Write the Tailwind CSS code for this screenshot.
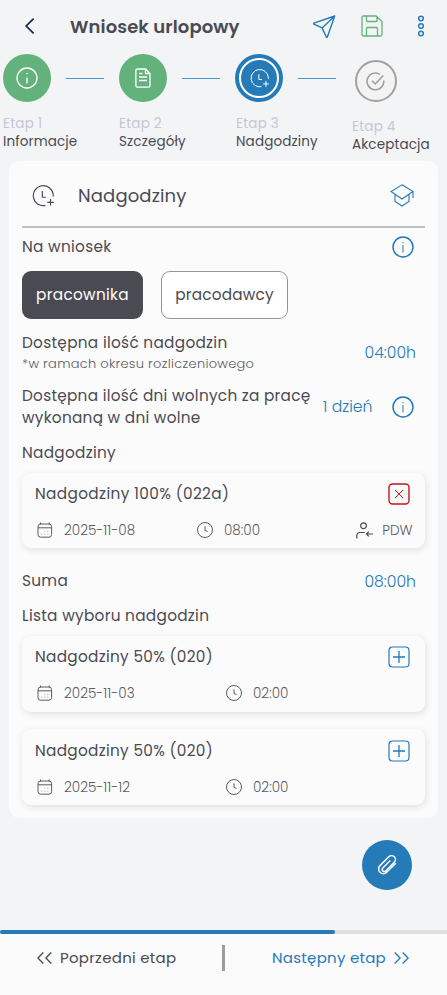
<!DOCTYPE html>
<html lang="pl">
<head>
<meta charset="utf-8">
<title>Wniosek urlopowy</title>
<script src="https://cdn.jsdelivr.net/npm/@tailwindcss/browser@4"></script>
</head>
<body class="bg-[#f2f4f6]">
<svg class="hidden">
  <symbol id="clock-plus" viewBox="0 0 22 22"><path d="M21.2 11.5V9.5A10 10 0 1 0 13.4 20.4M10.3 6v6.2h3.6M18.5 14v6.6M15.2 17.3h6.6" fill="none" stroke="currentColor" stroke-width="1.15"/></symbol>
  <symbol id="info" viewBox="0 0 22 22"><circle cx="11" cy="11" r="10" fill="none" stroke="currentColor" stroke-width="1.5"/><path d="M11 9v7.5M11 6v1.3" stroke="currentColor"/></symbol>
  <symbol id="calendar" viewBox="0 0 16 16"><rect x="1" y="2" width="13.6" height="13.2" rx="2.6" fill="none" stroke="currentColor" stroke-width=".9"/><path d="M1 5.8h13.6M3.5.5v2M12.2.5v2" stroke="currentColor" stroke-width=".9"/><path d="M7.3 9.3h1M10.3 9.3h1M4 12.2h1M7.3 12.2h1M10.3 12.2h1" stroke="currentColor" stroke-width=".8" opacity=".55"/></symbol>
  <symbol id="clock" viewBox="0 0 16 16"><circle cx="8" cy="8" r="7.5" fill="none" stroke="currentColor" stroke-width=".9"/><path d="M8 4.3v4.2l2.6.9" fill="none" stroke="currentColor" stroke-width=".9"/></symbol>
  <symbol id="plus-box" viewBox="0 0 22 22"><rect x="1" y="1" width="20" height="20" rx="3.5" fill="none" stroke="currentColor" stroke-width="1.2"/><path d="M11 5v12M5 11h12" stroke="currentColor" stroke-width="1.3"/></symbol>
</svg>
<div class="flex h-[995px] w-[447px] flex-col overflow-hidden bg-[#f2f4f6] font-['Poppins','Inter',sans-serif] text-[15.3px] font-normal tracking-[0.3px] text-[#4a4a52] whitespace-nowrap">
  <header class="flex h-[52px] shrink-0 items-center pl-[24px]">
    <svg class="h-4 w-[11px]" viewBox="0 0 11 16" fill="none" stroke="#1c2745" stroke-width="1.7"><path d="M9.6.7 2.2 8l7.4 7.3"/></svg>
    <h1 class="ml-[35px] w-[243px] text-[18px] font-semibold tracking-[0.1px]">Wniosek urlopowy</h1>
    <svg class="h-[23px] w-[23px]" viewBox="0 0 23 23" fill="none" stroke="#257ab8" stroke-width="1.4" stroke-linejoin="round"><path d="M21.7 1 .9 8.2c-.4.2-.4.8 0 1l8.2 3.7L13.3 22c.3.5.8.5 1 0ZM21.7 1 9.1 12.9"/></svg>
    <svg class="ml-[25px] h-[22px] w-[22px]" viewBox="0 0 22 22" fill="none" stroke="#63b27c" stroke-width="1.3"><path d="M2.5 1H15l6 5.5v13a1.5 1.5 0 0 1-1.5 1.5h-17A1.5 1.5 0 0 1 1 19.5V2.5A1.5 1.5 0 0 1 2.5 1ZM5.5 1v4.5a1 1 0 0 0 1 1H15a1 1 0 0 0 1-1V2M5.5 21v-7.5a1 1 0 0 1 1-1h9a1 1 0 0 1 1 1V21"/></svg>
    <svg class="ml-[34px] h-[22px] w-[8px]" viewBox="0 0 8 22" fill="none" stroke="#257ab8" stroke-width="1.5"><circle cx="4" cy="3.5" r="2.3"/><circle cx="4" cy="11" r="2.3"/><circle cx="4" cy="18.5" r="2.3"/></svg>
  </header>

  <nav class="flex h-[109px] shrink-0 pl-[3px] text-[13.5px] tracking-[0.13px]">
    <div class="w-[116px] pt-[2px]">
      <div class="flex items-center">
        <div class="flex size-12 items-center justify-center rounded-full bg-[#63b27c] text-white"><svg class="size-[22px]" viewBox="0 0 22 22" fill="none" stroke="currentColor" stroke-width="1.3"><circle cx="11" cy="11" r="10"/><path d="M11 10.5v6M11 6v1.3"/></svg></div>
        <div class="ml-[15px] h-px w-[38px] bg-[#4d93cb]"></div>
      </div>
      <div class="mt-[13px] h-[17px] leading-[18px] tracking-[0.22px] text-[#c6c6d6]">Etap 1</div>
      <div class="h-[20px] leading-[20px]">Informacje</div>
    </div>
    <div class="w-[117px] pt-[2px]">
      <div class="flex items-center">
        <div class="flex size-12 items-center justify-center rounded-full bg-[#63b27c] text-white"><svg class="h-[20px] w-[16px]" viewBox="0 0 16 20" fill="none" stroke="currentColor" stroke-width="1.3"><path d="M2.2 1h8.300L15 5.500v12.300a1.300 1.300 0 0 1-1.300 1.300H2.200A1.300 1.300 0 0 1 .9 17.800V2.300A1.300 1.300 0 0 1 2.200 1ZM10.500 1v4.500H15M4 5.500h3.500M4 9h8M4 12.500h8"/></svg></div>
        <div class="ml-[15px] h-px w-[38px] bg-[#4d93cb]"></div>
      </div>
      <div class="mt-[13px] h-[17px] leading-[18px] tracking-[0.22px] text-[#c6c6d6]">Etap 2</div>
      <div class="h-[20px] leading-[20px]">Szczegóły</div>
    </div>
    <div class="w-[116px] pt-[2px]">
      <div class="flex items-center">
        <div class="-ml-px flex size-12 items-center justify-center rounded-full bg-[#257ab8]"><div class="flex size-10 items-center justify-center rounded-full border-2 border-white text-white"><svg class="size-[19px]"><use href="#clock-plus"/></svg></div></div>
        <div class="ml-[15px] h-px w-[38px] bg-[#4d93cb]"></div>
      </div>
      <div class="mt-[13px] h-[17px] leading-[18px] tracking-[0.22px] text-[#c6c6d6]">Etap 3</div>
      <div class="h-[20px] leading-[20px]">Nadgodziny</div>
    </div>
    <div class="pt-[8px]">
      <div class="ml-[2.5px] flex size-[42px] items-center justify-center rounded-full border-2 border-[#a0a0a0] bg-[#f3f3f3] text-[#9c9c9c]"><svg class="size-[19px]" viewBox="0 0 19 19" fill="none" stroke="currentColor" stroke-width="1.5"><path d="M14 2.300A8.400 8.400 0 1 0 17.800 8.500M6 8.800l3.300 3.200 8-8.500"/></svg></div>
      <div class="mt-[16px] h-[17px] leading-[18px] tracking-[0.22px] text-[#c6c6d6]">Etap 4</div>
      <div class="h-[20px] leading-[20px]">Akceptacja</div>
    </div>
  </nav>

  <main class="mx-[9px] h-[657px] shrink-0 rounded-[10px] bg-[#fbfbfb] pr-[13.5px] pl-[13px]">
    <div class="flex h-[67px] items-center border-b-2 border-[#bdc3c9] pt-[4px] pl-[10px]">
      <svg class="size-[22px]"><use href="#clock-plus"/></svg>
      <h2 class="ml-[24px] text-[18px] tracking-[0.13px]">Nadgodziny</h2>
      <svg class="mr-[11px] ml-auto h-[23px] w-[24px]" viewBox="0 0 24 23" fill="none" stroke="#257ab8" stroke-width="1.1"><path d="M12 .8 23 7.500 12 15 1 7.500ZM5 10.500v7l7 4.500 7-4.500v-7M23 7.500V14"/></svg>
    </div>
    <div class="flex h-[38px] items-center justify-between pr-[10.5px]">
      <span class="pt-px">Na wniosek</span>
      <svg class="size-[22px] text-[#257ab8]"><use href="#info"/></svg>
    </div>
    <div class="mt-[5px] flex gap-[18px]">
      <div class="flex h-12 w-[121px] items-center justify-center rounded-[9px] bg-[#4a4a52] text-white">pracownika</div>
      <div class="flex h-12 w-[127px] items-center justify-center rounded-[9px] border border-[#96969a] bg-white tracking-[0.2px]">pracodawcy</div>
    </div>
    <div class="mt-[13px] flex h-[42px] items-center justify-between pr-[8.5px]">
      <div>
        <div class="h-[22px] leading-[22px]">Dostępna ilość nadgodzin</div>
        <div class="h-[20px] text-[13px] leading-[20px] font-light tracking-[0.28px] text-[#5a5a62]">*w ramach okresu rozliczeniowego</div>
      </div>
      <span class="text-[15.7px] font-light tracking-normal text-[#257ab8]">04:00h</span>
    </div>
    <div class="mt-[11px] flex h-[44px] items-center pr-[10.5px] leading-[22px]">
      <div class="tracking-[0.27px]">Dostępna ilość dni wolnych za pracę<br>wykonaną w dni wolne</div>
      <span class="-ml-2 grow pr-[19.5px] text-right text-[15.7px] font-light tracking-normal text-[#257ab8]">1 dzień</span>
      <svg class="size-[22px] text-[#257ab8]"><use href="#info"/></svg>
    </div>
    <div class="mt-[14px] h-[20px] leading-[20px]">Nadgodziny</div>

    <section class="mt-[10px] h-[75px] rounded-[9px] bg-[#fbfbfb] px-[13px] pt-[10px] shadow-[1px_2px_7px_rgba(0,0,0,0.11)]">
      <div class="flex h-[22px] items-center justify-between pr-[2px]">
        <span class="pt-px tracking-[0.36px]">Nadgodziny 100% (022a)</span>
        <svg class="size-[22px]" viewBox="0 0 22 22" fill="none" stroke="#c4161c" stroke-width="1.4"><rect x="1" y="1" width="20" height="20" rx="3.5"/><path d="m7 7 8 8M15 7l-8 8" stroke-width="1"/></svg>
      </div>
      <div class="mt-[15px] flex h-[20px] items-center text-[13.6px] font-light tracking-normal">
        <svg class="ml-[2px] size-4"><use href="#calendar"/></svg>
        <span class="ml-[11px] w-[133px] pt-[1.5px] text-[#5a5a62]">2025-11-08</span>
        <svg class="size-4"><use href="#clock"/></svg>
        <span class="ml-[11px] pt-[1.5px] text-[#5a5a62]">08:00</span>
        <svg class="mr-[9px] ml-auto h-[17px] w-[17px]" viewBox="0 0 17 17" fill="none" stroke="currentColor" stroke-width="1.2"><circle cx="7.5" cy="3.8" r="2.9"/><path d="M.8 16.500v-3a3 3 0 0 1 3-3h5M10.500 12h6.500M12.800 9.700 10.500 12l2.300 2.300"/></svg>
        <span class="-mr-px pt-[1.5px] text-[#5a5a62]">PDW</span>
      </div>
    </section>
    <div class="mt-[23px] flex h-[20px] items-center justify-between pt-px pr-[8.5px]"><span>Suma</span><span class="text-[15.7px] font-light tracking-normal text-[#257ab8]">08:00h</span></div>
    <div class="mt-[15px] h-[20px] leading-[20px]">Lista wyboru nadgodzin</div>

    <section class="mt-[10px] h-[76px] rounded-[9px] bg-[#fbfbfb] px-[13px] pt-[10px] shadow-[1px_2px_7px_rgba(0,0,0,0.11)]">
      <div class="flex h-[22px] items-center justify-between pr-[2px]">
        <span class="pt-px">Nadgodziny 50% (020)</span>
        <svg class="size-[22px] text-[#257ab8]"><use href="#plus-box"/></svg>
      </div>
      <div class="mt-[15px] flex h-[20px] items-center text-[13.6px] font-light tracking-normal">
        <svg class="ml-[2px] size-4"><use href="#calendar"/></svg>
        <span class="ml-[11px] w-[162px] pt-[1.5px] text-[#5a5a62]">2025-11-03</span>
        <svg class="size-4"><use href="#clock"/></svg>
        <span class="ml-[11px] pt-[1.5px] text-[#5a5a62]">02:00</span>
      </div>
    </section>
    <section class="mt-[17px] h-[76px] rounded-[9px] bg-[#fbfbfb] px-[13px] pt-[11px] shadow-[1px_2px_7px_rgba(0,0,0,0.11)]">
      <div class="flex h-[22px] items-center justify-between pr-[2px]">
        <span class="pt-px">Nadgodziny 50% (020)</span>
        <svg class="size-[22px] text-[#257ab8]"><use href="#plus-box"/></svg>
      </div>
      <div class="mt-[15px] flex h-[20px] items-center text-[13.6px] font-light tracking-normal">
        <svg class="ml-[2px] size-4"><use href="#calendar"/></svg>
        <span class="ml-[11px] w-[162px] pt-[1.5px] text-[#5a5a62]">2025-11-12</span>
        <svg class="size-4"><use href="#clock"/></svg>
        <span class="ml-[11px] pt-[1.5px] text-[#5a5a62]">02:00</span>
      </div>
    </section>
  </main>

  <div class="flex h-[112px] shrink-0 justify-end pt-[22px] pr-[35px]">
    <button class="flex size-[50px] items-center justify-center rounded-full bg-[#257ab8]"><svg class="size-[22px]" viewBox="0 0 22 22" fill="none" stroke="#fff" stroke-width="1.5" stroke-linecap="round"><path d="m19.500 9.500-8.800 8.800a4.700 4.700 0 0 1-6.700 0 4.700 4.700 0 0 1 0-6.700l8.800-8.800a3.900 3.900 0 0 1 5.500 0 3.900 3.900 0 0 1 0 5.500l-8.600 8.600a2 2 0 0 1-2.900 0 2 2 0 0 1 0-2.900l7-7"/></svg></button>
  </div>
  <div class="h-[4px] shrink-0 bg-[#dedfe0]"><div class="h-full w-[335px] rounded-full bg-[#257ab8]"></div></div>
  <footer class="flex flex-1 items-start bg-[#fbfbfb] pt-[11px] pl-[37px] text-[15px] tracking-[0.27px]">
    <div class="flex h-[26px] w-[185px] items-center gap-[8px]"><svg class="h-[12px] w-[15px]" viewBox="0 0 15 12" fill="none" stroke="currentColor" stroke-width="1.3"><path d="M6.300.5.900 6l5.400 5.500M14.300.5 8.900 6l5.400 5.500"/></svg>Poprzedni etap</div>
    <div class="h-[26px] w-[3px] bg-[#9c9ca0]"></div>
    <div class="ml-[47px] flex h-[26px] items-center gap-[8px] text-[#257ab8]">Następny etap<svg class="h-[12px] w-[15px]" viewBox="0 0 15 12" fill="none" stroke="currentColor" stroke-width="1.3"><path d="M.7.5 6.100 6 .7 11.500M8.700.5l5.400 5.500-5.400 5.500"/></svg></div>
  </footer>
</div>
</body>
</html>
